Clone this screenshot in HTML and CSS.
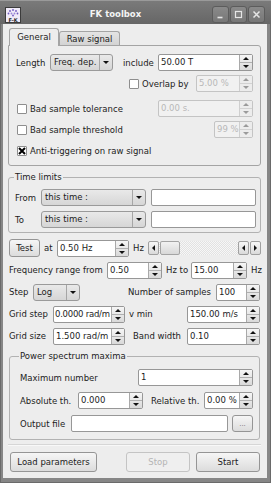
FILE: index.html
```html
<!DOCTYPE html>
<html lang="en">
  <head>
    <meta charset="UTF-8" />
    <meta name="viewport" content="width=device-width, initial-scale=1.0" />
    <title>FK toolbox</title>
    <link rel="stylesheet" href="styles.css">
  </head>
  <body>
    <div class="window">
      <!-- Title bar -->
      <div class="titlebar">
        <svg class="app-icon" width="16" height="16" viewBox="0 0 16 16">
          <rect x="0.5" y="0.5" width="15" height="15" fill="#efeaf8" stroke="#3c3c3c" />
          <circle cx="8" cy="3" r="0.9" fill="#7058c0" />
          <circle cx="5" cy="4" r="0.9" fill="#7058c0" />
          <circle cx="11" cy="4" r="0.9" fill="#7058c0" />
          <circle cx="3.5" cy="6.5" r="0.9" fill="#7058c0" />
          <circle cx="12.5" cy="6.5" r="0.9" fill="#7058c0" />
          <circle cx="6.5" cy="6.5" r="0.9" fill="#9a86d8" />
          <circle cx="9.5" cy="6.5" r="0.9" fill="#9a86d8" />
          <circle cx="8" cy="8.5" r="0.9" fill="#7058c0" />
          <text x="8" y="14.6" text-anchor="middle" font-size="5" font-weight="bold" font-family="DejaVu Sans, sans-serif" fill="#222">F-K</text>
        </svg>
        <div class="title">FK toolbox</div>
        <div class="wm-buttons">
          <span class="wm-btn">
            <svg width="9" height="9" viewBox="0 0 9 9"><path d="M1.5 7.5h5" stroke="#e6e6e6" stroke-width="1.6" /></svg>
          </span>
          <span class="wm-btn">
            <svg width="9" height="9" viewBox="0 0 9 9"><rect x="1.5" y="1.5" width="6" height="6" fill="none" stroke="#e6e6e6" stroke-width="1.2" /></svg>
          </span>
          <span class="wm-btn">
            <svg width="9" height="9" viewBox="0 0 9 9"><path d="M1.5 1.5l6 6M7.5 1.5l-6 6" stroke="#e6e6e6" stroke-width="1.5" /></svg>
          </span>
        </div>
      </div>

      <div class="client">
        <!-- Tabs -->
        <div class="tabs">
          <div class="tab active">General</div>
          <div class="tab">Raw signal</div>
        </div>
        <div class="tab-pane">
          <div class="row">
            <span class="lbl w-length">Length</span>
            <div class="combo w-freqdep">
              <span class="combo-text">Freq. dep.</span>
              <span class="combo-arrow"><i class="tri-down"></i></span>
            </div>
            <span class="lbl w-include">include</span>
            <div class="spin grow">
              <span class="spin-text">50.00 T</span>
              <span class="spin-btns"><span><i class="tri-up"></i></span><span><i class="tri-down"></i></span></span>
            </div>
          </div>
          <div class="row overlap-row gap-4">
            <span class="check"></span>
            <span class="lbl check-lbl grow">Overlap by</span>
            <div class="spin disabled w-57">
              <span class="spin-text">5.00 %</span>
              <span class="spin-btns"><span><i class="tri-up"></i></span><span><i class="tri-down"></i></span></span>
            </div>
          </div>
          <div class="row gap-8">
            <span class="check indent"></span>
            <span class="lbl check-lbl grow">Bad sample tolerance</span>
            <div class="spin disabled w-95">
              <span class="spin-text">0.00 s.</span>
              <span class="spin-btns"><span><i class="tri-up"></i></span><span><i class="tri-down"></i></span></span>
            </div>
          </div>
          <div class="row gap-4">
            <span class="check indent"></span>
            <span class="lbl check-lbl grow">Bad sample threshold</span>
            <div class="spin disabled w-39">
              <span class="spin-text">99 %</span>
              <span class="spin-btns"><span><i class="tri-up"></i></span><span><i class="tri-down"></i></span></span>
            </div>
          </div>
          <div class="row gap-4">
            <span class="check indent checked">
              <svg width="8" height="8" viewBox="0 0 8 8"><path d="M1 1l6 6M7 1l-6 6" stroke="#000" stroke-width="2" /></svg>
            </span>
            <span class="lbl check-lbl">Anti-triggering on raw signal</span>
          </div>
        </div>

        <!-- Time limits -->
        <fieldset class="group time-group">
          <legend>Time limits</legend>
          <div class="row">
            <span class="lbl w-from">From</span>
            <div class="combo w-105">
              <span class="combo-text">this time :</span>
              <span class="combo-arrow"><i class="tri-down"></i></span>
            </div>
            <div class="line-edit w-105 push-5"></div>
          </div>
          <div class="row gap-5">
            <span class="lbl w-from">To</span>
            <div class="combo w-105">
              <span class="combo-text">this time :</span>
              <span class="combo-arrow"><i class="tri-down"></i></span>
            </div>
            <div class="line-edit w-105 push-5"></div>
          </div>
        </fieldset>

        <!-- Test frequency -->
        <div class="row tall test-row">
          <button class="btn btn-test">Test</button>
          <span class="lbl w-at">at</span>
          <div class="spin w-72">
            <span class="spin-text">0.50 Hz</span>
            <span class="spin-btns"><span><i class="tri-up"></i></span><span><i class="tri-down"></i></span></span>
          </div>
          <span class="lbl w-hz">Hz</span>
          <div class="scrollbar">
            <span class="sb-btn"><i class="tri-left"></i></span>
            <span class="sb-track"><span class="sb-handle"></span></span>
            <span class="sb-btn"><i class="tri-left"></i></span>
            <span class="sb-btn"><i class="tri-right"></i></span>
          </div>
        </div>

        <div class="row tall gap-4">
          <span class="lbl w-freq">Frequency range from</span>
          <div class="spin w-55">
            <span class="spin-text">0.50</span>
            <span class="spin-btns"><span><i class="tri-up"></i></span><span><i class="tri-down"></i></span></span>
          </div>
          <span class="lbl w-hzto">Hz to</span>
          <div class="spin w-56">
            <span class="spin-text">15.00</span>
            <span class="spin-btns"><span><i class="tri-up"></i></span><span><i class="tri-down"></i></span></span>
          </div>
          <span class="lbl w-hz2">Hz</span>
        </div>

        <div class="row tall gap-4 pad-r1">
          <span class="lbl w-step">Step</span>
          <div class="combo w-47">
            <span class="combo-text">Log</span>
            <span class="combo-arrow"><i class="tri-down"></i></span>
          </div>
          <span class="lbl push-auto">Number of samples</span>
          <div class="spin w-44 push-5">
            <span class="spin-text">100</span>
            <span class="spin-btns"><span><i class="tri-up"></i></span><span><i class="tri-down"></i></span></span>
          </div>
        </div>

        <div class="row tall gap-4 pad-r1">
          <span class="lbl w-grid">Grid step</span>
          <div class="spin w-72">
            <span class="spin-text tight">0.0000 rad/m</span>
            <span class="spin-btns"><span><i class="tri-up"></i></span><span><i class="tri-down"></i></span></span>
          </div>
          <span class="lbl grow push-4">v min</span>
          <div class="spin w-73">
            <span class="spin-text">150.00 m/s</span>
            <span class="spin-btns"><span><i class="tri-up"></i></span><span><i class="tri-down"></i></span></span>
          </div>
        </div>

        <div class="row tall gap-4 pad-r1">
          <span class="lbl w-grid">Grid size</span>
          <div class="spin w-72">
            <span class="spin-text">1.500 rad/m</span>
            <span class="spin-btns"><span><i class="tri-up"></i></span><span><i class="tri-down"></i></span></span>
          </div>
          <span class="lbl grow push-8">Band width</span>
          <div class="spin w-73">
            <span class="spin-text">0.10</span>
            <span class="spin-btns"><span><i class="tri-up"></i></span><span><i class="tri-down"></i></span></span>
          </div>
        </div>

        <!-- Power spectrum maxima -->
        <fieldset class="group power-group">
          <legend>Power spectrum maxima</legend>
          <div class="row">
            <span class="lbl grow">Maximum number</span>
            <div class="spin w-115">
              <span class="spin-text">1</span>
              <span class="spin-btns"><span><i class="tri-up"></i></span><span><i class="tri-down"></i></span></span>
            </div>
          </div>
          <div class="row gap-6">
            <span class="lbl w-abs">Absolute th.</span>
            <div class="spin w-65">
              <span class="spin-text">0.000</span>
              <span class="spin-btns"><span><i class="tri-up"></i></span><span><i class="tri-down"></i></span></span>
            </div>
            <span class="lbl grow push-8">Relative th.</span>
            <div class="spin w-49">
              <span class="spin-text">0.00 %</span>
              <span class="spin-btns"><span><i class="tri-up"></i></span><span><i class="tri-down"></i></span></span>
            </div>
          </div>
          <div class="row gap-6">
            <span class="lbl w-out">Output file</span>
            <div class="line-edit grow"></div>
            <button class="btn btn-browse">...</button>
          </div>
        </fieldset>

        <div class="separator"></div>

        <div class="button-bar">
          <button class="btn btn-load">Load parameters</button>
          <button class="btn btn-stop" disabled>Stop</button>
          <button class="btn btn-start">Start</button>
        </div>
      </div>
    </div>
  </body>
</html>
```

FILE: styles.css
```css
body {
  margin: 0;
  font-family: 'DejaVu Sans', 'Liberation Sans', sans-serif;
  font-size: 8.5px;
  color: #1c1c1c;
  background-color: #7d7d7d;
}
.window {
  width: 271px;
  height: 483px;
  box-sizing: border-box;
  display: flex;
  flex-direction: column;
  padding: 0 4px 5px 3px;
  background-color: #868686;
  box-shadow: inset 1px 0 0 #6a6a6a, inset -1px 0 0 #6a6a6a, inset 0 -1px 0 #6a6a6a;
}

/* title bar */
.titlebar {
  height: 24px;
  margin: 0 -4px 0 -3px;
  padding: 5px 6px 0 5px;
  box-sizing: border-box;
  display: flex;
  align-items: flex-start;
  background: linear-gradient(#7a7a7a, #666666);
  border-top: 1px solid #9a9a9a;
}
.app-icon {
  margin-top: 1px;
  flex-shrink: 0;
}
.title {
  flex: 1;
  text-align: center;
  color: #f4f4f4;
  font-weight: bold;
  line-height: 16px;
  padding-right: 2px;
}
.wm-buttons {
  display: flex;
  gap: 1px;
}
.wm-btn {
  width: 17px;
  height: 17px;
  box-sizing: border-box;
  display: flex;
  align-items: center;
  justify-content: center;
  border: 1px solid #5c5c5c;
  border-radius: 3px;
  background: linear-gradient(#8a8a8a, #777777);
}

/* client area */
.client {
  flex: 1;
  background-color: #ededed;
  padding: 4px 6px 0 5px;
  display: flex;
  flex-direction: column;
}

.row {
  display: flex;
  align-items: center;
  height: 17px;
  flex-shrink: 0;
}
.row.tall {
  height: 18px;
}
.gap-4 { margin-top: 4px; }
.gap-5 { margin-top: 5px; }
.gap-6 { margin-top: 6px; }
.gap-8 { margin-top: 8px; }
.grow { flex: 1; }
.push-4 { margin-left: 4px; }
.push-5 { margin-left: 5px; }
.push-8 { margin-left: 8px; }
.push-auto { margin-left: auto; }
.pad-r1 { padding-right: 1px; }
.lbl {
  white-space: nowrap;
  flex-shrink: 0;
}
.lbl.grow { flex: 1; }

/* tabs */
.tabs {
  display: flex;
  align-items: flex-end;
  height: 17px;
  padding-left: 1px;
}
.tab {
  box-sizing: border-box;
  border: 1px solid #a4a4a4;
  border-bottom: none;
  border-radius: 3px 3px 0 0;
  text-align: center;
}
.tab.active {
  width: 50px;
  height: 18px;
  line-height: 17px;
  background-color: #ededed;
  margin-bottom: -1px;
  position: relative;
  z-index: 1;
}
.tab:not(.active) {
  width: 61px;
  height: 14px;
  line-height: 13px;
  background: linear-gradient(#e4e4e4, #d3d3d3);
  padding-top: 1px;
}
.tab-pane {
  border: 1px solid #a4a4a4;
  border-radius: 0 3px 3px 3px;
  padding: 8px 7px 6px 7px;
}

/* inputs */
.spin,
.line-edit,
.combo {
  box-sizing: border-box;
  height: 17px;
  flex-shrink: 0;
  display: flex;
  align-items: stretch;
}
.spin,
.line-edit {
  background-color: #ffffff;
  border: 1px solid #979797;
  border-radius: 2px;
}
.spin.grow,
.line-edit.grow {
  flex: 1;
}
.spin-text {
  flex: 1;
  padding-left: 2px;
  line-height: 15px;
  white-space: nowrap;
  overflow: hidden;
}
.spin-text.tight {
  padding-left: 1px;
  letter-spacing: -0.25px;
}
.spin-btns {
  width: 12px;
  display: flex;
  flex-direction: column;
  border-left: 1px solid #a9a9a9;
  background: linear-gradient(#f6f6f6, #d9d9d9);
}
.spin-btns span {
  flex: 1;
  display: flex;
  align-items: center;
  justify-content: center;
}
.spin-btns span + span {
  border-top: 1px solid #b0b0b0;
}
.spin.disabled {
  background-color: #f1f1f1;
  border-color: #c4c4c4;
  color: #b8b8b8;
}
.spin.disabled .spin-btns {
  border-left-color: #cfcfcf;
  background: #ececec;
}
.spin.disabled .spin-btns span + span {
  border-top-color: #d2d2d2;
}
.spin.disabled i {
  border-top-color: #9a9a9a;
  border-bottom-color: #9a9a9a;
}

.tri-up,
.tri-down,
.tri-left,
.tri-right {
  width: 0;
  height: 0;
  display: block;
}
.tri-up {
  border-left: 3px solid transparent;
  border-right: 3px solid transparent;
  border-bottom: 3px solid #111;
}
.tri-down {
  border-left: 3px solid transparent;
  border-right: 3px solid transparent;
  border-top: 3px solid #111;
}
.tri-left {
  border-top: 3px solid transparent;
  border-bottom: 3px solid transparent;
  border-right: 3px solid #111;
}
.tri-right {
  border-top: 3px solid transparent;
  border-bottom: 3px solid transparent;
  border-left: 3px solid #111;
}

.combo {
  border: 1px solid #9a9a9a;
  border-radius: 3px;
  background: linear-gradient(#e9e9e9, #d6d6d6);
}
.combo-text {
  flex: 1;
  padding-left: 3px;
  line-height: 14px;
  white-space: nowrap;
}
.combo-arrow {
  width: 12px;
  border-left: 1px solid #a6a6a6;
  display: flex;
  align-items: center;
  justify-content: center;
}

.check {
  width: 10px;
  height: 10px;
  box-sizing: border-box;
  flex-shrink: 0;
  border: 1px solid #8e8e8e;
  border-radius: 1px;
  background-color: #ffffff;
  display: flex;
  align-items: center;
  justify-content: center;
}
.check.indent {
  margin-left: 1px;
}
.check-lbl {
  margin-left: 3px;
}
.overlap-row {
  padding-left: 113px;
}

/* widths */
.w-length { width: 34px; }
.w-freqdep { width: 63px; }
.w-include { width: 35px; margin-left: 10px; }
.w-39 { width: 39px; }
.w-44 { width: 44px; }
.w-47 { width: 47px; }
.w-49 { width: 49px; }
.w-55 { width: 55px; }
.w-56 { width: 56px; }
.w-57 { width: 57px; }
.w-65 { width: 65px; }
.w-72 { width: 72px; }
.w-73 { width: 73px; }
.w-95 { width: 95px; }
.w-105 { width: 105px; }
.w-115 { width: 115px; }
.w-from { width: 26px; }
.w-at { width: 13px; margin-left: 4px; }
.w-hz { width: 15px; margin-left: 4px; }
.w-freq { width: 98px; margin-left: 1px; }
.w-hzto { width: 25px; margin-left: 4px; }
.w-hz2 { width: 10px; margin-left: 4px; }
.w-step { width: 24px; margin-left: 1px; }
.w-grid { width: 44px; margin-left: 1px; }
.w-abs { width: 58px; }
.w-out { width: 51px; }

/* group boxes */
.group {
  margin: 5px 0 0;
  min-width: 0;
  border: 1px solid #b2b2b2;
  border-radius: 3px;
}
.group legend {
  padding: 0 1px;
  margin-left: -1px;
  line-height: 12px;
}
.time-group {
  padding: 6px 4px 4px 6px;
}
.power-group {
  margin: 5px 1px 0;
  padding: 7px 6px 7px 10px;
}

/* buttons */
.btn {
  font-family: inherit;
  font-size: inherit;
  color: #1c1c1c;
  box-sizing: border-box;
  border: 1px solid #959595;
  border-radius: 3px;
  background: linear-gradient(#f6f6f6, #dcdcdc);
  padding: 0;
  flex-shrink: 0;
}
.btn-test {
  width: 31px;
  height: 18px;
  margin-left: 1px;
}
.btn-browse {
  width: 21px;
  height: 17px;
  margin-left: 4px;
  color: #777;
  font-size: 7px;
  line-height: 10px;
}
.test-row {
  margin-top: 6px;
}

/* scrollbar */
.scrollbar {
  flex: 1;
  height: 14px;
  box-sizing: border-box;
  display: flex;
  margin-left: 0;
}
.sb-btn {
  width: 11px;
  box-sizing: border-box;
  border: 1px solid #a0a0a0;
  border-radius: 2px;
  background: linear-gradient(#f6f6f6, #dadada);
  display: flex;
  align-items: center;
  justify-content: center;
}
.sb-btn + .sb-btn {
  margin-left: 1px;
}
.sb-track {
  flex: 1;
  display: flex;
  align-items: stretch;
  background: repeating-conic-gradient(#e2e2e2 0 25%, #f7f7f7 0 50%) 0 0 / 2px 2px;
}
.sb-handle {
  width: 20px;
  margin-left: 1px;
  box-sizing: border-box;
  border: 1px solid #a4a4a4;
  border-radius: 2px;
  background: linear-gradient(#f2f2f2, #d8d8d8);
}

/* bottom */
.separator {
  margin-top: 4px;
  border-top: 1px solid #d6d6d6;
  border-bottom: 1px solid #f8f8f8;
}
.button-bar {
  display: flex;
  margin-top: 6px;
  padding: 0 1px 0 2px;
}
.button-bar .btn {
  height: 20px;
  width: 64px;
}
.button-bar .btn-load {
  width: 87px;
  margin-right: auto;
}
.button-bar .btn-start {
  margin-left: 6px;
}
.btn-stop:disabled {
  color: #b4b4b4;
  border-color: #c4c4c4;
  background: #efefef;
}
```
